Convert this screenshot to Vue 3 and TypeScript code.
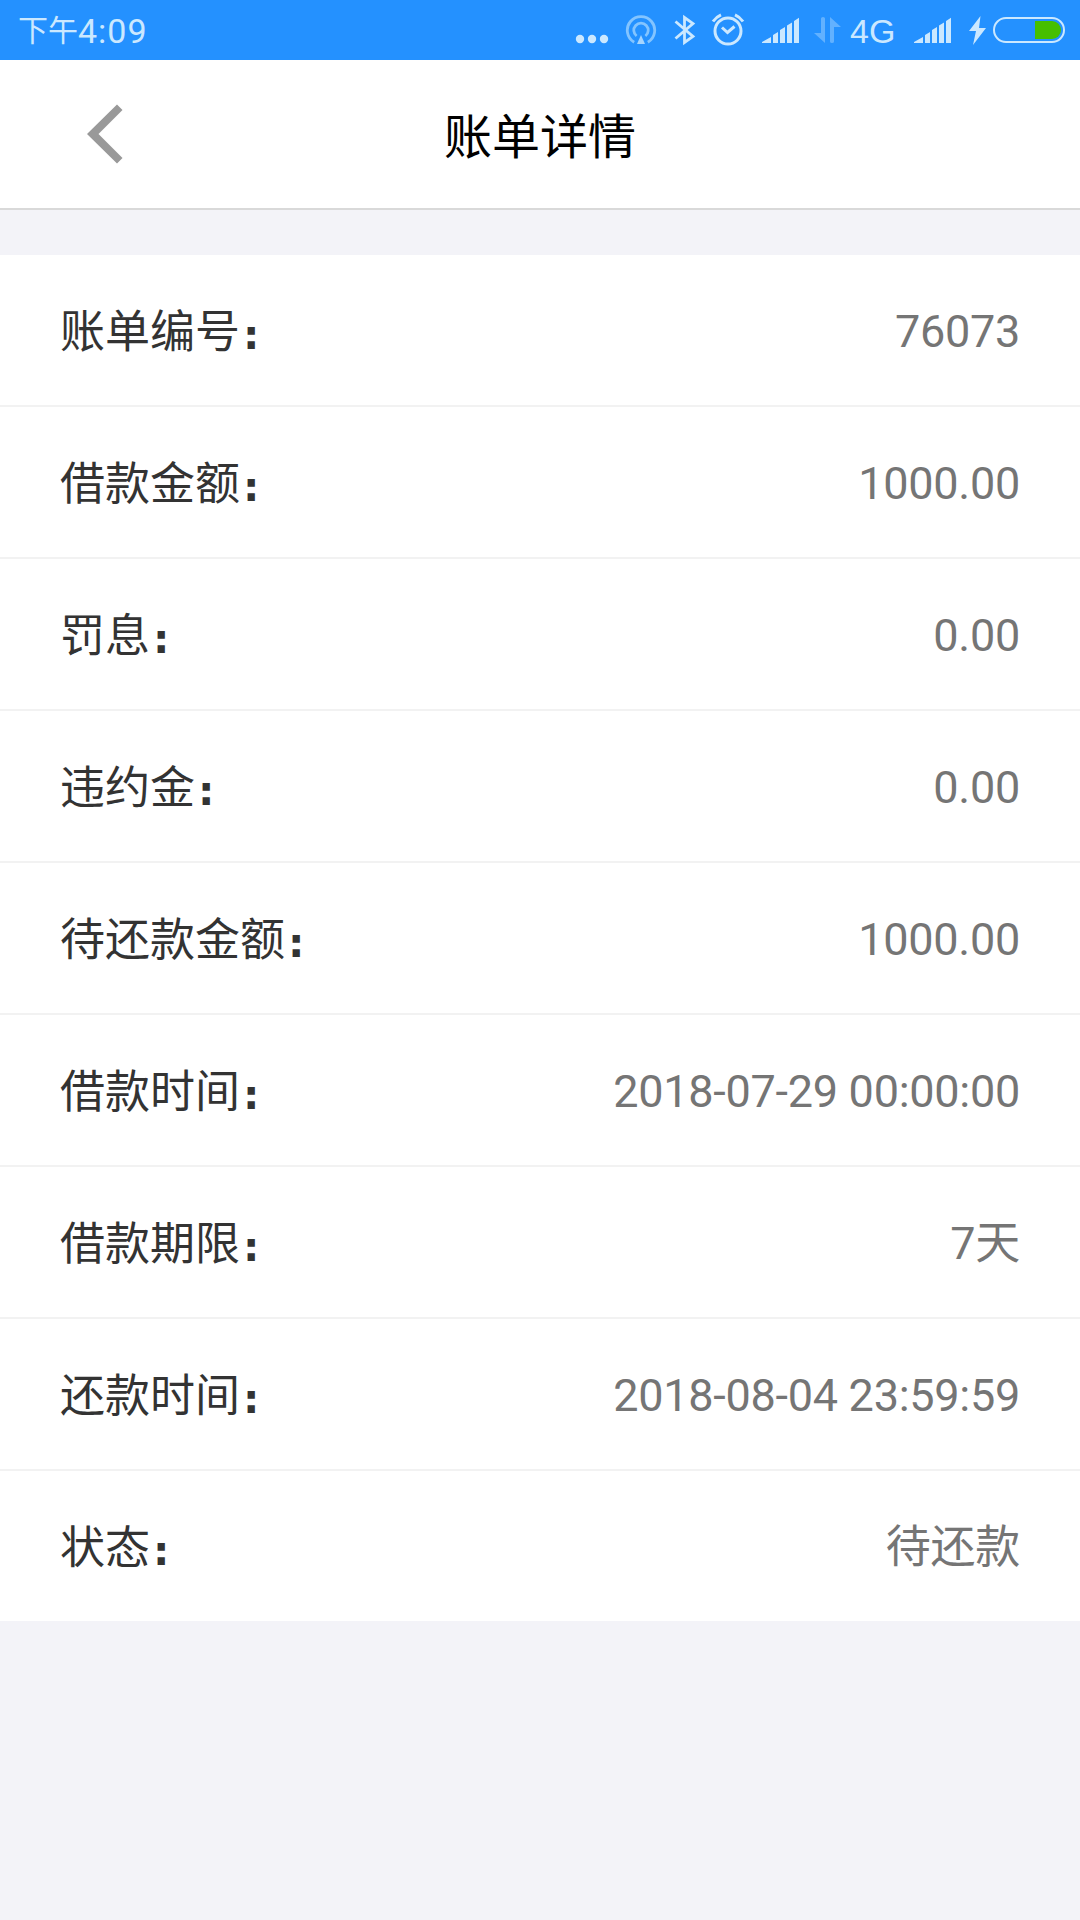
<script setup lang="ts">
interface BillField {
  label: string
  value: string
}

const fields: BillField[] = [
  { label: '账单编号', value: '76073' },
  { label: '借款金额', value: '1000.00' },
  { label: '罚息', value: '0.00' },
  { label: '违约金', value: '0.00' },
  { label: '待还款金额', value: '1000.00' },
  { label: '借款时间', value: '2018-07-29 00:00:00' },
  { label: '借款期限', value: '7天' },
  { label: '还款时间', value: '2018-08-04 23:59:59' },
  { label: '状态', value: '待还款' },
]
</script>

<template>
  <div class="screen">
    <div class="status-bar">
      <div class="clock"><span class="period">下午</span><span>4:09</span></div>
      <div class="indicators">
        <svg class="dots" width="34" height="60" viewBox="0 0 34 60">
          <circle cx="5" cy="39" r="4.2" /><circle cx="17" cy="39" r="4.2" /><circle cx="29" cy="39" r="4.2" />
        </svg>
        <svg class="hotspot" width="32" height="60" viewBox="0 0 32 60">
          <path d="M9.2 42.2A13.7 13.7 0 1 1 22.8 42.2" />
          <path d="M11.6 36A7.2 7.2 0 1 1 20.4 36" />
          <path class="solid" d="M16 35l4 9h-8z" />
        </svg>
        <svg class="bluetooth" width="22" height="60" viewBox="0 0 22 60">
          <path d="M1.500 21.500L19 36.500L10.500 42.500V17.500L19 23.500L1.500 38.500" />
        </svg>
        <svg class="alarm" width="34" height="60" viewBox="0 0 34 60">
          <circle cx="17" cy="31" r="13" />
          <path d="M11 27.5l5.5 5 7-6M2 21.5Q5 17 10 14.8M32 21.5Q29 17 24 14.8" />
        </svg>
        <svg class="signal" width="38" height="60" viewBox="0 0 38 60">
          <path d="M0 43v-1l9-5v6zM11 43v-8l5-3v11zM18 43V30l5-3v16zM25 43V25.500l5-3V43zM32 43V21l5-3.200V43z" />
        </svg>
        <svg class="transfer" width="28" height="60" viewBox="0 0 28 60">
          <path d="M7 18.500q0-1.500 2-1.500t2 1.500V43L0 33h7zM16 41.500q0 1.500 2 1.500t2-1.500V27h7L16 17z" />
        </svg>
        <span class="network">4G</span>
        <svg class="signal second" width="38" height="60" viewBox="0 0 38 60">
          <path d="M0 43v-1l9-5v6zM11 43v-8l5-3v11zM18 43V30l5-3v16zM25 43V25.500l5-3V43zM32 43V21l5-3.200V43z" />
        </svg>
        <svg class="bolt" width="17" height="60" viewBox="0 0 17 60">
          <path d="M11.500 16L0 31h7l-3 14L17 28h-7z" />
        </svg>
        <svg class="battery" width="72" height="60" viewBox="0 0 72 60">
          <rect x="1" y="18" width="70" height="24" rx="12" />
          <path d="M42 21h17a9 9 0 0 1 0 18H42z" />
        </svg>
      </div>
    </div>

    <header class="nav">
      <button class="back" aria-label="返回">
        <svg width="36" height="60" viewBox="0 0 36 60">
          <path d="M0 30L30 .5l5.500 5.500-24 24 24 24-5.500 5.500z" />
        </svg>
      </button>
      <h1>账单详情</h1>
    </header>

    <main class="fields">
      <div v-for="field in fields" :key="field.label" class="field">
        <span class="label">{{ field.label }}<b>:</b></span>
        <span class="value">{{ field.value }}</span>
      </div>
    </main>
  </div>
</template>

<style>
body {
  margin: 0;
  background: #f3f3f8;
}
</style>

<style scoped>
.screen {
  width: 1080px;
  height: 1920px;
  overflow: hidden;
  background: #f3f3f8;
  font-family: Roboto, "Noto Sans CJK SC", sans-serif;
}

.status-bar {
  display: flex;
  justify-content: space-between;
  height: 60px;
  background: #2491ff;
  color: #cbe8ff;
}

.clock {
  display: flex;
  margin-left: 18px;
  font-size: 34px;
  letter-spacing: 1px;
  line-height: 62px;
}

.period {
  font-size: 30px;
  letter-spacing: 0;
}

.indicators {
  display: flex;
  margin-right: 15px;
}

.indicators svg {
  display: block;
  flex: none;
  fill: #cbe8ff;
}

.indicators .hotspot {
  margin-left: 16px;
  fill: none;
  stroke: #83c4ff;
  stroke-width: 2.8;
}

.indicators .hotspot .solid {
  fill: #a5d5ff;
  stroke: none;
}

.indicators .bluetooth {
  margin-left: 17px;
  fill: none;
  stroke: #cbe8ff;
  stroke-width: 2.8;
}

.indicators .alarm {
  margin-left: 15px;
  fill: none;
  stroke: #cbe8ff;
  stroke-width: 3;
}

.indicators .signal {
  margin-left: 17px;
}

.indicators .transfer {
  margin-left: 14px;
  fill: #62b1ff;
}

.network {
  width: 48px;
  margin-left: 8px;
  font-family: "Liberation Sans", sans-serif;
  font-size: 34px;
  line-height: 62px;
}

.indicators .second {
  margin-left: 16px;
}

.indicators .bolt {
  margin-left: 17px;
}

.indicators .battery {
  margin-left: 7px;
}

.indicators .battery rect {
  fill: none;
  stroke: #cbe8ff;
  stroke-width: 2;
}

.indicators .battery path {
  fill: #46bf00;
}

.nav {
  display: grid;
  grid-template-columns: 1fr auto 1fr;
  align-items: center;
  height: 148px;
  border-bottom: 2px solid #d9d9d9;
  background: #fff;
}

.back {
  justify-self: start;
  margin: 0 0 0 87px;
  padding: 0;
  border: 0;
  background: none;
}

.back svg {
  display: block;
  fill: #999;
}

h1 {
  margin: 0;
  padding-top: 8px;
  color: #000;
  font-size: 48px;
  font-weight: 400;
  line-height: 72px;
}

.fields {
  margin-top: 45px;
  background: #fff;
}

.field {
  display: flex;
  align-items: center;
  justify-content: space-between;
  height: 150px;
  padding: 0 60px;
  border-bottom: 2px solid #f2f2f2;
  font-size: 45px;
  line-height: 68px;
}

.field:last-child {
  border-bottom: 0;
}

.label {
  padding-top: 6px;
  color: #333;
}

.label b {
  margin-left: 3px;
  font-family: "DejaVu Sans", sans-serif;
  font-size: 41px;
  font-weight: 700;
  line-height: 0;
  vertical-align: -1px;
}

.value {
  padding-top: 3px;
  color: #757575;
  letter-spacing: -0.27px;
}
</style>
